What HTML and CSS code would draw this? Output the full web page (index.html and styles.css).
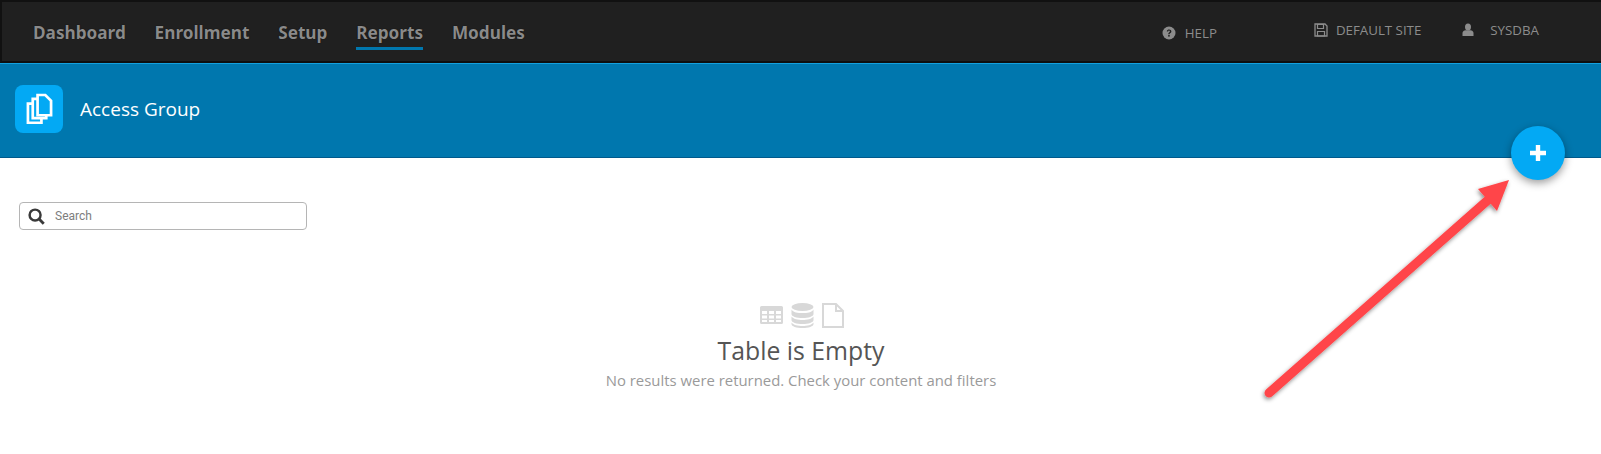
FILE: index.html
```html
<!DOCTYPE html>
<html lang="en">
<head>
<meta charset="utf-8">
<title>Access Group</title>
<link rel="stylesheet" href="styles.css">
</head>
<body>
<header class="topbar">
  <nav class="main-nav">
    <a class="nav-link">Dashboard</a>
    <a class="nav-link">Enrollment</a>
    <a class="nav-link">Setup</a>
    <a class="nav-link active">Reports</a>
    <a class="nav-link">Modules</a>
  </nav>
  <div class="util-nav">
    <a class="util util-help">
      <svg class="util-icon" viewBox="0 0 14 14"><circle cx="7" cy="7" r="6.500" fill="#8c8c8c"/><path d="M4.800 5.400C5 4 6 3.400 7.100 3.400c1.300 0 2.300.8 2.300 2 0 1.600-1.800 1.600-1.800 2.900H6.200c0-2 1.700-2 1.700-2.900 0-.5-.4-.8-.9-.8-.5 0-.8.3-.9.9z" fill="#202020"/><rect x="6.200" y="9" width="1.500" height="1.600" fill="#202020"/></svg>
      HELP
    </a>
    <a class="util util-site">
      <svg class="util-icon" viewBox="0 0 14 14"><path d="M1 1h10l2 2v10H1z" fill="none" stroke="#8c8c8c" stroke-width="1.300"/><path d="M3.500 1.500h6v4h-6z" fill="none" stroke="#8c8c8c" stroke-width="1.200"/><path d="M3.500 8.500h7V13h-7z" fill="none" stroke="#8c8c8c" stroke-width="1.200"/></svg>
      DEFAULT SITE
    </a>
    <a class="util util-user">
      <svg class="util-icon" viewBox="0 0 14 14"><ellipse cx="7" cy="4" rx="3" ry="3.600" fill="#8c8c8c"/><path d="M1.500 13V10c0-1.700 1.600-2.600 3-2.800h5c1.400.2 3 1.100 3 2.800v3z" fill="#8c8c8c"/></svg>
      SYSDBA
    </a>
  </div>
</header>

<section class="page-band">
  <span class="page-icon">
    <svg viewBox="0 0 28 32"><g fill="#03a9f4" stroke="#fff" stroke-width="2.800"><path d="M2 11h14v20H2z"/><path d="M7 6h14v20H7z"/><path d="M12 2h8l6 6v15H12z"/></g></svg>
  </span>
  <h1 class="page-title">Access Group</h1>
</section>

<main class="content">
  <div class="search">
    <svg class="search-icon" viewBox="0 0 18 18"><circle cx="7.500" cy="7.500" r="5.800" fill="none" stroke="#3a3a3a" stroke-width="2.600"/><path d="M11.700 11.700l5 5" stroke="#3a3a3a" stroke-width="3"/></svg>
    <span class="search-text">Search</span>
  </div>
  <div class="empty">
    <div class="empty-icons">
      <svg class="icon-table" width="23" height="18" viewBox="0 0 23 18"><path fill="#d8d8d8" fill-rule="evenodd" d="M1.500 0h20A1.500 1.500 0 0 1 23 1.500v15a1.500 1.500 0 0 1-1.500 1.500h-20A1.500 1.500 0 0 1 0 16.500v-15A1.500 1.500 0 0 1 1.500 0zM2 5v3h5V5zm7 0v3h5V5zm7 0v3h5V5zM2 9.500v3h5v-3zm7 0v3h5v-3zm7 0v3h5v-3zM2 14v2h5v-2zm7 0v2h5v-2zm7 0v2h5v-2z"/></svg>
      <svg width="23" height="25" viewBox="0 0 23 25"><g fill="#d8d8d8"><ellipse cx="11.500" cy="4" rx="11" ry="4"/><path d="M.5 6.500C2 9.500 7 10 11.500 10s9.500-.5 11-3.500V11c0 2.500-5 4-11 4S.5 13.500.5 11z"/><path d="M.5 13.500C2 16 7 17 11.500 17s9.500-1 11-3.500V17c0 2.500-5 4-11 4S.5 19.500.5 17z"/><path d="M.5 19.500C2 22 7 23 11.500 23s9.500-1 11-3.500V21c0 2.500-5 4-11 4S.5 23.500.5 21z"/></g></svg>
      <svg width="22" height="25" viewBox="0 0 22 25"><path d="M1 1h13l7 7v16H1z" fill="none" stroke="#d8d8d8" stroke-width="2"/><path d="M14 1v7h7" fill="none" stroke="#d8d8d8" stroke-width="2"/></svg>
    </div>
    <h2 class="empty-title">Table is Empty</h2>
    <p class="empty-text">No results were returned. Check your content and filters</p>
  </div>
</main>

<button class="fab" type="button" aria-label="Add">
  <svg viewBox="0 0 16 16" width="16" height="16"><path d="M5.800 0h4.400v5.800H16v4.400h-5.800V16H5.800v-5.800H0V5.800h5.800z" fill="#fff"/></svg>
</button>

<svg class="arrow" viewBox="0 0 300 250" width="300" height="250">
  <defs><filter id="arrow-shadow" x="-10%" y="-10%" width="125%" height="125%"><feDropShadow dx="-1" dy="2" stdDeviation="2" flood-color="#000" flood-opacity=".45"/></filter></defs>
  <g filter="url(#arrow-shadow)">
    <path d="M29 233L248 40" stroke="#ff4548" stroke-width="9" stroke-linecap="round"/>
    <path d="M269 20L238 29L257 51z" fill="#ff4548"/>
  </g>
</svg>
</body>
</html>
```
FILE: styles.css
```css
* { box-sizing: border-box; }
html, body { margin: 0; padding: 0; }
body { width: 1601px; height: 454px; overflow: hidden; background: #fff; font-family: "Open Sans", sans-serif; position: relative; }

.topbar { height: 63px; display: flex; justify-content: space-between; background: #202020; border: 2px solid #111; border-bottom-color: #0e0e0e; border-right: 0; }
.main-nav { display: flex; gap: 28.800px; padding: 19px 0 0 31px; }
.nav-link { height: 29px; font: 700 17.200px/23px "Noto Sans", sans-serif; color: #8a8a8a; text-shadow: 0 0 1px #000; }
.nav-link.active { border-bottom: 3px solid #0077ae; }

.util-nav { display: flex; }
.util { display: flex; align-items: center; gap: 9px; height: 18px; font-size: 13.300px; line-height: 18px; color: #8c8c8c; }
.util-icon { width: 14px; height: 14px; flex: none; }
.util-help { margin: 22px 97px 0 0; }
.util-site { margin: 19px 40px 0 0; gap: 8px; }
.util-user { margin: 19px 62px 0 0; gap: 15px; }

.page-band { height: 95px; display: flex; align-items: center; gap: 17px; padding: 0 0 3px 15px; background: #0077ae; border-top: 1px solid #13a0de; border-bottom: 1px solid #005a8c; }
.page-icon { width: 48px; height: 48px; display: flex; align-items: center; justify-content: center; padding: 0 0 1px 1px; background: #03a9f4; border-radius: 8px; }
.page-icon svg { width: 27px; height: 31px; }
.page-title { margin: 0; font-size: 19px; font-weight: 400; line-height: 24px; color: #fff; }

.content { padding: 44px 0 0 19px; }
.search { width: 288px; height: 28px; display: flex; align-items: center; gap: 10px; padding-left: 8px; border: 1px solid #b5b5b5; border-radius: 4px; }
.search-icon { width: 17px; height: 17px; }
.search-text { font: 12px/16px Roboto, sans-serif; color: #7d7d7d; }

.empty { margin: 73px 0 0 -19px; display: flex; flex-direction: column; align-items: center; padding-left: 1px; }
.empty-icons { display: flex; align-items: center; gap: 8px; height: 25px; padding-left: 2px; }
.icon-table { margin-bottom: 2px; }
.empty-title { margin: 6px 0 0; font-size: 24.800px; font-weight: 400; line-height: 32px; color: #555; }
.empty-text { margin: 4px 0 0; font-size: 14.900px; line-height: 20px; color: #9a9a9a; }

.fab { position: absolute; left: 1511px; top: 126px; width: 54px; height: 54px; padding: 0; display: flex; align-items: center; justify-content: center; border: 0; border-radius: 50%; background: #03a9f4; box-shadow: 0 3px 8px rgba(0,0,0,.4); }
.arrow { position: absolute; left: 1240px; top: 160px; }
```
